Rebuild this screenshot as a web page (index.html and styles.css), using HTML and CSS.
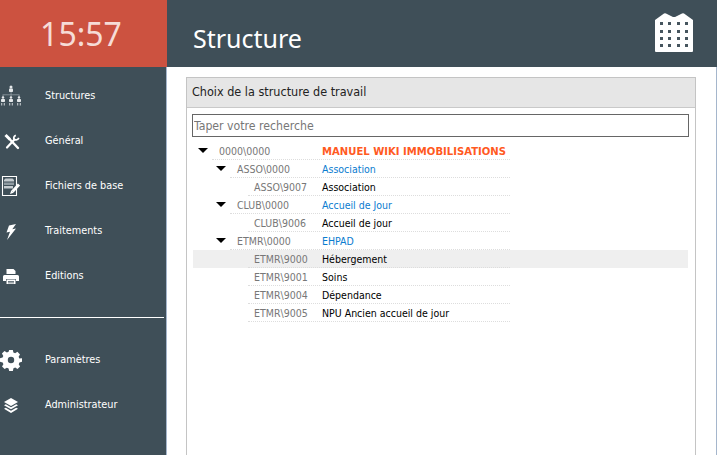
FILE: index.html
```html
<!DOCTYPE html>
<html lang="fr">
<head>
<meta charset="utf-8">
<title>Structure</title>
<link rel="stylesheet" href="styles.css">
</head>
<body>
<div class="app">
  <aside class="sidebar">
    <div class="clock">15:57</div>
    <nav class="nav">
      <a class="item"><svg class="ico" viewBox="0 0 22 22"><g fill="#e4e8ea"><circle cx="11" cy="2" r="1.500"/><rect x="9" y="3.500" width="4" height="3.500" rx=".8"/><rect x="10.700" y="7" width=".7" height="3" fill="#9aa5ab"/><rect x="2.500" y="9.500" width="17" height=".7" fill="#9aa5ab"/><rect x="2.700" y="10" width=".7" height="2" fill="#9aa5ab"/><rect x="10.700" y="10" width=".7" height="2" fill="#9aa5ab"/><rect x="18.700" y="10" width=".7" height="2" fill="#9aa5ab"/><circle cx="3" cy="12.500" r="1.200"/><rect x="1" y="14" width="4" height="3" rx=".7"/><circle cx="11" cy="12.500" r="1.200"/><rect x="9" y="14" width="4" height="3" rx=".7"/><circle cx="19" cy="12.500" r="1.200"/><rect x="17" y="14" width="4" height="3" rx=".7"/><rect x="1" y="18" width="1.300" height="2.500" fill="#aeb6bb"/><rect x="3.700" y="18" width="1.300" height="2.500" fill="#aeb6bb"/><rect x="9" y="18" width="1.300" height="2.500" fill="#aeb6bb"/><rect x="11.700" y="18" width="1.300" height="2.500" fill="#aeb6bb"/><rect x="17" y="18" width="1.300" height="2.500" fill="#aeb6bb"/><rect x="19.700" y="18" width="1.300" height="2.500" fill="#aeb6bb"/></g></svg><span>Structures</span></a>
      <a class="item"><svg class="ico" viewBox="0 0 22 22"><g fill="none" stroke="#fff"><path d="M5.500 5 10 9.500" stroke-width="3"/><path d="M10 9.500 18 18" stroke-width="2.400" stroke-linecap="round"/><path d="M14.500 9.500 7 17.500" stroke-width="2.200" stroke-linecap="round"/><path d="M15.800 5.200a3.500 3.500 0 0 0-1.800 4.300M14 9.500a3.500 3.500 0 0 0 4.800-1.700" stroke-width="1.700"/></g></svg><span>Général</span></a>
      <a class="item"><svg class="ico" viewBox="0 0 22 22"><path d="M2.500 1.500h14v19h-14z" fill="none" stroke="#fff" stroke-width="1.100"/><path d="M5.500 3.500h7l1.500 1.500v1.500h-10V5z" fill="#c5ccd0"/><path d="M4 7.500h10V10H4z" fill="#8f9ba2"/><path d="M4 11h9v2.500H4z" fill="#c5ccd0"/><path d="M19 9.500 12.500 16.500" fill="none" stroke="#fff" stroke-width="3"/><path d="M11.300 15.300l2.400 2.400-3.700 1.300z" fill="#fff"/></svg><span>Fichiers de base</span></a>
      <a class="item"><svg class="ico" viewBox="0 0 22 22"><path d="M16 4 9 5.500 6.500 12.500l3.500-.8L7 20l9-11.500-3.700.8z" fill="#fff"/></svg><span>Traitements</span></a>
      <a class="item"><svg class="ico" viewBox="0 0 22 22"><path d="M6.500 4h7l2 2v3h-9z" fill="#fff"/><path d="M4.500 10h13a1.500 1.500 0 0 1 1.500 1.500V16h-3v-2H6v2H3v-4.500A1.500 1.500 0 0 1 4.500 10z" fill="#fff"/><path d="M6.500 14.500h9V19h-9z" fill="#fff"/><path d="M8 16h6v.8H8zM8 17.500h6v.8H8z" fill="#3f4f58"/></svg><span>Editions</span></a>
    </nav>
    <hr class="sep">
    <nav class="nav nav-low">
      <a class="item"><svg class="ico" viewBox="-1 -1 24 24"><path fill="#fff" fill-rule="evenodd" d="M9 0h4l.6 2.800 1.900.8 2.500-1.500 2.800 2.800-1.500 2.500.8 1.900L23 9v4l-2.800.6-.8 1.900 1.500 2.500-2.800 2.800-2.500-1.500-1.900.8L13 23H9l-.6-2.800-1.900-.8-2.500 1.500-2.800-2.800 1.500-2.500-.8-1.900L-1 13V9l2.800-.6.8-1.900L1.100 4l2.800-2.800L6.500 2.800l1.900-.8zM11 7.500a3.500 3.500 0 1 0 0 7 3.500 3.500 0 0 0 0-7z"/></svg><span>Paramètres</span></a>
      <a class="item"><svg class="ico" viewBox="0 0 22 22"><g fill="#fff"><path d="M11 4 18 8 11 12 4 8z"/><path d="M5.800 10.200 11 13.200l5.200-3 1.800 1L11 15.200 4 11.200z"/><path d="M5.800 13.700 11 16.700l5.200-3 1.800 1L11 19 4 14.700z"/></g></svg><span>Administrateur</span></a>
    </nav>
  </aside>
  <div class="main">
    <header class="top">
      <h1>Structure</h1>
      <svg class="building" viewBox="0 0 38 40"><path fill="#fff" d="M0 8 9 1.500Q10 1 11 1.500l7 3.500h2l7-3.500Q28 1 29 1.500L38 8v31q0 1-1 1H1q-1 0-1-1z"/><g fill="#46555e"><rect x="5" y="10" width="3" height="3"/><rect x="13" y="10" width="3" height="3"/><rect x="22" y="10" width="3" height="3"/><rect x="30" y="10" width="3" height="3"/><rect x="5" y="18" width="3" height="3"/><rect x="13" y="18" width="3" height="3"/><rect x="22" y="18" width="3" height="3"/><rect x="30" y="18" width="3" height="3"/><rect x="5" y="25" width="3" height="3"/><rect x="13" y="25" width="3" height="3"/><rect x="22" y="25" width="3" height="3"/><rect x="30" y="25" width="3" height="3"/><rect x="5" y="32" width="3" height="3"/><rect x="13" y="32" width="3" height="3"/><rect x="22" y="32" width="3" height="3"/><rect x="30" y="32" width="3" height="3"/></g></svg>
    </header>
    <section class="content">
      <div class="panel">
        <div class="panel-head">Choix de la structure de travail</div>
        <div class="panel-body">
          <input class="search" type="text" placeholder="Taper votre recherche">
          <div class="tree">
            <div class="row l0"><i class="tw"></i><span class="code">0000\0000</span><span class="lab root">MANUEL WIKI IMMOBILISATIONS</span></div>
            <div class="row l1"><i class="tw"></i><span class="code">ASSO\0000</span><span class="lab blue">Association</span></div>
            <div class="row l2"><span class="code">ASSO\9007</span><span class="lab">Association</span></div>
            <div class="row l1"><i class="tw"></i><span class="code">CLUB\0000</span><span class="lab blue">Accueil de Jour</span></div>
            <div class="row l2"><span class="code">CLUB\9006</span><span class="lab">Accueil de jour</span></div>
            <div class="row l1"><i class="tw"></i><span class="code">ETMR\0000</span><span class="lab blue">EHPAD</span></div>
            <div class="row l2 sel"><span class="code">ETMR\9000</span><span class="lab">Hébergement</span></div>
            <div class="row l2"><span class="code">ETMR\9001</span><span class="lab">Soins</span></div>
            <div class="row l2"><span class="code">ETMR\9004</span><span class="lab">Dépendance</span></div>
            <div class="row l2"><span class="code">ETMR\9005</span><span class="lab">NPU Ancien accueil de jour</span></div>
          </div>
        </div>
      </div>
    </section>
  </div>
</div>
</body>
</html>
```
FILE: styles.css
```css
* { box-sizing: border-box; }
html, body { margin: 0; height: 100%; overflow: hidden; }
body { font-family: "DejaVu Sans Condensed", "DejaVu Sans", sans-serif; font-stretch: condensed; font-size: 10px; background: #fff; }
.app { display: flex; height: 455px; width: 717px; }
.sidebar { width: 167px; flex: none; background: #3f4f58; border-right: 1px solid #a5b6cc; color: #fff; }
.clock { height: 67px; background: #cc5240; margin-right: -1px; text-align: center; color: #f6dcd7; font: 32px/68px "Noto Sans", sans-serif; padding-right: 5px; }
.nav { display: flex; flex-direction: column; padding-top: 6px; }
.nav-low { padding-top: 19px; }
.item { height: 45px; display: flex; align-items: center; font-size: 10.800px; color: #fff; }
.ico { width: 22px; height: 22px; flex: none; margin-right: 23px; }
.sep { border: 0; height: 1px; background: #fff; margin: 19px 2px 0 0; }
.main { flex: 1; display: flex; flex-direction: column; min-width: 0; border-right: 1px solid #a5b6cc; }
.top { height: 67px; margin-right: -1px; background: #3f4f58; display: flex; justify-content: space-between; align-items: center; padding: 0 24px 0 26px; }
.top h1 { margin: 9px 0 0; font: 400 25px "Noto Sans", sans-serif; color: #fff; }
.building { width: 38px; height: 40px; margin-top: -4px; }
.content { flex: 1; padding: 10px 20px 0 19px; min-height: 0; }
.panel { height: 100%; border: 1px solid #c4c4c4; border-bottom: 0; }
.panel-head { height: 30px; background: #e6e6e6; border-bottom: 1px solid #c9c9c9; padding: 0 5px; font-size: 12.500px; line-height: 28px; color: #222; }
.panel-body { padding: 6px 6px 0 5px; }
.search { display: block; width: 497px; height: 23px; border: 1px solid #666; padding: 0 1px; font: condensed 12.200px "DejaVu Sans Condensed", "DejaVu Sans", sans-serif; outline: 0; }
.search::placeholder { color: #777; opacity: 1; }
.tree { margin-top: 5px; padding-left: 1px; padding-right: 1px; }
.row { height: 18px; display: flex; align-items: center; position: relative; font-size: 10.500px; }
.row::after { content: ""; position: absolute; bottom: 0; right: 178px; border-bottom: 1px dotted #ddd; }
.l0::after { left: 19px; }
.l1::after { left: 37px; }
.l2::after { left: 55px; }
.code { color: #777; }
.l0 .code { margin-left: 26px; }
.l1 .code { margin-left: 44px; }
.l2 .code { margin-left: 61px; }
.lab { position: absolute; left: 129px; color: #000; }
.blue { color: #0a7ccf; }
.root { color: #ff5a1f; font-weight: 700; font-size: 11.200px; }
.tw { position: absolute; width: 0; height: 0; border: 5px solid transparent; border-top: 5px solid #000; border-bottom: 0; top: 6px; }
.l0 .tw { left: 5px; }
.l1 .tw { left: 23px; }
.sel { background: #efefef; }
```
